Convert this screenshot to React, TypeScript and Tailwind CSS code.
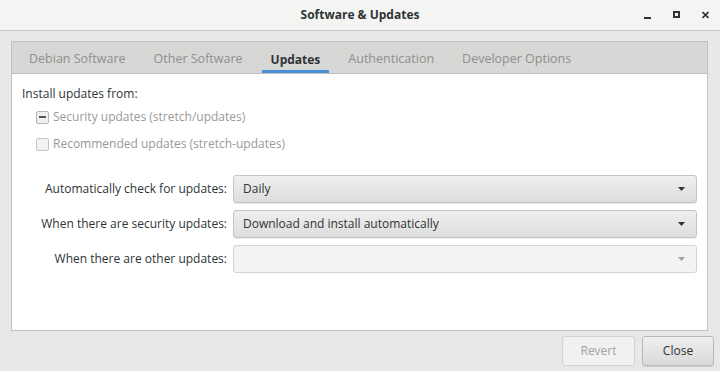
import React from 'react';

const font = { fontFamily: '"Open Sans", "Noto Sans", "DejaVu Sans", sans-serif' };

function Combo({ value, disabled }: { value?: string; disabled?: boolean }) {
  return (
    <div
      className={`flex h-[28px] flex-1 items-center justify-between rounded-[3px] border pl-[9px] pr-[11px] text-[12px] ${
        disabled
          ? 'border-[#d4d4d4] bg-[#f3f3f3] text-[#9a9a9a]'
          : 'border-[#c4c4c4] bg-gradient-to-b from-[#efefef] to-[#dddddd] text-[#2e3436] shadow-[0_1px_0_rgba(0,0,0,0.08)]'
      }`}
    >
      <span>{value}</span>
      <svg width="7" height="4" viewBox="0 0 7 4">
        <path d="M0 0h7L3.5 4z" fill={disabled ? '#a0a0a0' : '#2e3436'} />
      </svg>
    </div>
  );
}

function Row({ label, children }: { label: string; children: React.ReactNode }) {
  return (
    <div className="flex items-center">
      <div className="w-[211px] pr-[6px] text-right text-[12px] text-[#2e3436]">{label}</div>
      {children}
    </div>
  );
}

export default function App() {
  const tabs = ['Debian Software', 'Other Software', 'Updates', 'Authentication', 'Developer Options'];

  return (
    <div className="flex h-[371px] w-[720px] flex-col bg-[#e8e8e7]" style={font}>
      {/* title bar */}
      <div className="relative flex h-[31px] items-center justify-center border-b border-[#c8c8c6] bg-[#f4f4f3]">
        <span className="text-[12px] font-bold text-[#2e3436]">Software &amp; Updates</span>
        <div className="absolute right-[11px] top-0 flex h-full items-center gap-[22px] text-[#2e3436]">
          <svg width="7" height="8" viewBox="0 0 7 8"><rect x="0" y="6" width="7" height="2" fill="currentColor" /></svg>
          <svg width="7" height="8" viewBox="0 0 7 8"><rect x="1" y="1" width="5" height="5" fill="none" stroke="currentColor" strokeWidth="2" /></svg>
          <svg width="7" height="8" viewBox="0 0 7 8"><path d="M0.5 1l6 6M6.5 1l-6 6" stroke="currentColor" strokeWidth="1.7" /></svg>
        </div>
      </div>

      {/* notebook */}
      <div className="ml-[11px] mr-[12px] mt-[10px] flex h-[290px] flex-col border border-[#c2c2c0] bg-white">
        <div className="flex h-[32px] items-stretch border-b border-[#bdbdbb] bg-[#d7d7d6] pl-[3px] text-[12.5px]">
          {tabs.map(t => (
            <div key={t} className="flex px-[5px]">
              <div
                className={`flex items-center border-b-[3px] px-[9px] pt-[7px] ${
                  t === 'Updates'
                    ? 'border-[#4a90d9] text-[12px] font-bold text-[#2e3436]'
                    : 'border-transparent text-[#8f908e]'
                }`}
              >
                {t}
              </div>
            </div>
          ))}
        </div>

        <div className="flex flex-col px-[10px] pt-[11px] text-[12px] text-[#2e3436]">
          <div>Install updates from:</div>
          <div className="ml-[14px] mt-[5px] flex flex-col gap-[9px] text-[#999a98]">
            <div className="flex items-center gap-[4px]">
              <span className="flex h-[13px] w-[13px] items-center justify-center rounded-[2px] border border-[#b6b6b6] bg-[#efefef]">
                <span className="h-[2px] w-[7px] bg-[#555]" />
              </span>
              <span>Security updates (stretch/updates)</span>
            </div>
            <div className="flex items-center gap-[4px]">
              <span className="h-[13px] w-[13px] rounded-[2px] border border-[#c6c6c6] bg-[#f2f2f2]" />
              <span>Recommended updates (stretch-updates)</span>
            </div>
          </div>

          <div className="mt-[22px] flex flex-col gap-[7px]">
            <Row label="Automatically check for updates:"><Combo value="Daily" /></Row>
            <Row label="When there are security updates:"><Combo value="Download and install automatically" /></Row>
            <Row label="When there are other updates:"><Combo disabled /></Row>
          </div>
        </div>
      </div>

      {/* action area */}
      <div className="flex flex-1 items-start justify-end gap-[7px] pr-[6px] pt-[5px] text-[12px]">
        <div className="flex h-[30px] w-[73px] items-center justify-center rounded-[3px] border border-[#d2d2d2] bg-[#f1f1f1] text-[#a3a3a3]">Revert</div>
        <div className="flex h-[30px] w-[72px] items-center justify-center rounded-[3px] border border-[#b9b9b9] bg-gradient-to-b from-[#eeeeee] to-[#dadada] text-[#2e3436] shadow-[0_1px_0_rgba(0,0,0,0.1)]">Close</div>
      </div>
    </div>
  );
}
